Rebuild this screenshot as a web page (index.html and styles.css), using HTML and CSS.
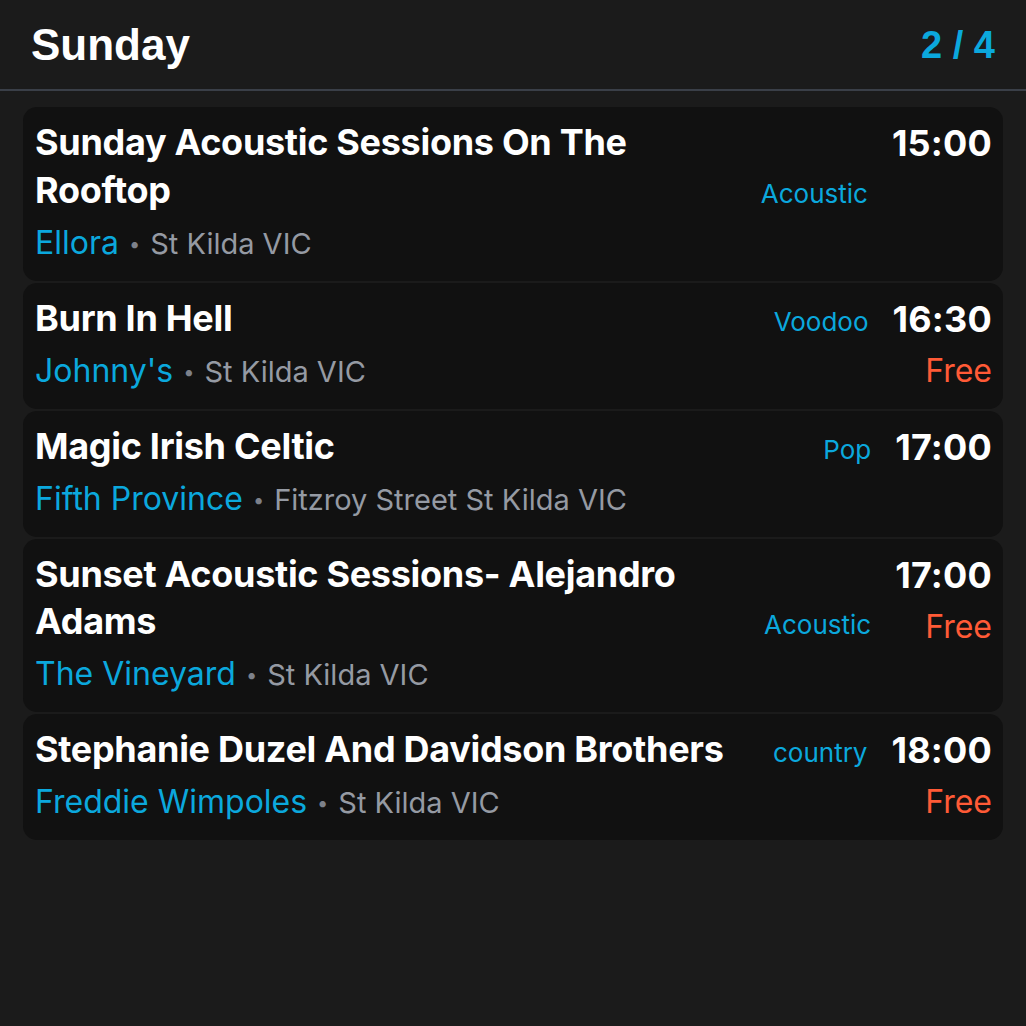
FILE: index.html
```html
<!DOCTYPE html>
<html lang="en">
<head>
<meta charset="utf-8">
<title>Sunday</title>
<link rel="stylesheet" href="styles.css">
</head>
<body>
<div class="screen">
  <header class="top">
    <h1 class="day">Sunday</h1>
    <div class="pager">2 / 4</div>
  </header>
  <main class="list">
    <article class="card">
      <div class="main">
        <div class="head">
          <h2 class="title">Sunday Acoustic Sessions On The Rooftop</h2>
          <span class="genre">Acoustic</span>
        </div>
        <div class="where"><span class="venue">Ellora</span><span class="dot">•</span><span class="loc">St Kilda VIC</span></div>
      </div>
      <div class="side">
        <div class="time">15:00</div>
      </div>
    </article>
    <article class="card">
      <div class="main">
        <div class="head">
          <h2 class="title">Burn In Hell</h2>
          <span class="genre">Voodoo</span>
        </div>
        <div class="where"><span class="venue">Johnny's</span><span class="dot">•</span><span class="loc">St Kilda VIC</span></div>
      </div>
      <div class="side">
        <div class="time">16:30</div>
        <div class="price">Free</div>
      </div>
    </article>
    <article class="card">
      <div class="main">
        <div class="head">
          <h2 class="title">Magic Irish Celtic</h2>
          <span class="genre">Pop</span>
        </div>
        <div class="where"><span class="venue">Fifth Province</span><span class="dot">•</span><span class="loc">Fitzroy Street St Kilda VIC</span></div>
      </div>
      <div class="side">
        <div class="time">17:00</div>
      </div>
    </article>
    <article class="card">
      <div class="main">
        <div class="head">
          <h2 class="title">Sunset Acoustic Sessions- Alejandro Adams</h2>
          <span class="genre">Acoustic</span>
        </div>
        <div class="where"><span class="venue">The Vineyard</span><span class="dot">•</span><span class="loc">St Kilda VIC</span></div>
      </div>
      <div class="side">
        <div class="time">17:00</div>
        <div class="price">Free</div>
      </div>
    </article>
    <article class="card">
      <div class="main">
        <div class="head">
          <h2 class="title">Stephanie Duzel And Davidson Brothers</h2>
          <span class="genre">country</span>
        </div>
        <div class="where"><span class="venue">Freddie Wimpoles</span><span class="dot">•</span><span class="loc">St Kilda VIC</span></div>
      </div>
      <div class="side">
        <div class="time">18:00</div>
        <div class="price">Free</div>
      </div>
    </article>
  </main>
</div>
</body>
</html>
```
FILE: styles.css
```css
html, body {
  margin: 0;
  padding: 0;
  background: #1b1b1b;
}
body {
  width: 1026px;
  height: 1026px;
  overflow: hidden;
  font-family: Inter, "Noto Sans", sans-serif;
  color: #ffffff;
}
.top {
  display: flex;
  align-items: center;
  justify-content: space-between;
  height: 91px;
  padding: 0 31px 0 31px;
  border-bottom: 2px solid #3a3f48;
  box-sizing: border-box;
}
.day {
  margin: 0;
  font-family: "Liberation Sans", Arial, sans-serif;
  font-weight: 700;
  font-size: 44px;
  line-height: 1;
  color: #ffffff;
}
.pager {
  font-family: "Liberation Sans", Arial, sans-serif;
  font-weight: 700;
  font-size: 38px;
  line-height: 1;
  color: #0ba8dd;
}
.list {
  display: flex;
  flex-direction: column;
  gap: 2px;
  padding: 16px 23px 0 23px;
}
.card {
  display: flex;
  align-items: flex-start;
  gap: 24px;
  background: #111111;
  border-radius: 14px;
  padding: 12px 11px 15px 12px;
}
.main {
  flex: 1;
  min-width: 0;
  display: flex;
  flex-direction: column;
}
.head {
  display: flex;
  align-items: last baseline;
  gap: 32px;
}
.title {
  flex: 1;
  margin: 0;
  font-size: 36px;
  font-weight: 700;
  line-height: 47.5px;
  letter-spacing: -0.3px;
  color: #ffffff;
}
.genre {
  font-size: 26px;
  color: #0ba8dd;
  white-space: nowrap;
}
.where {
  margin-top: 5.5px;
  font-size: 32px;
  line-height: 46px;
  height: 46px;
  white-space: nowrap;
}
.where span {
  line-height: 1;
}
.venue {
  font-size: 32px;
  color: #0ba8dd;
}
.dot {
  font-size: 20px;
  color: #7d818a;
  margin: 0 10px;
  position: relative;
  top: -3px;
}
.loc {
  font-size: 29px;
  color: #959aa3;
}
.side {
  display: flex;
  flex-direction: column;
  align-items: flex-end;
  padding-top: 1px;
}
.time {
  font-size: 36px;
  font-weight: 700;
  line-height: 47px;
  color: #ffffff;
  letter-spacing: 0.2px;
}
.price {
  margin-top: 5px;
  font-size: 32px;
  line-height: 46px;
  color: #ff5a36;
}
```
